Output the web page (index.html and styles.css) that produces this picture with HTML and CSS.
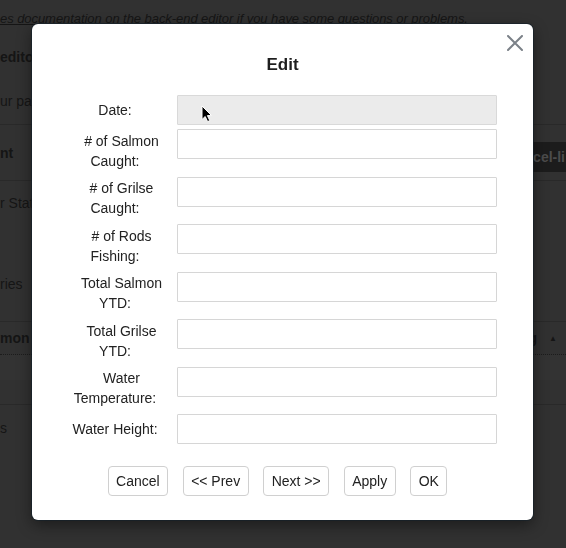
FILE: index.html
```html
<!DOCTYPE html>
<html lang="en">
<head>
<meta charset="utf-8">
<title>Edit</title>
<link rel="stylesheet" href="styles.css">
</head>
<body>
<div class="page">
  <p class="note"><span>es documentation on the back-end editor if you have some questions or problems.</span></p>
  <div class="row row-editor"><b>editor</b></div>
  <div class="row row-page rule"><span>ur page</span></div>
  <div class="row row-content rule">
    <b>nt</b>
    <span class="dark-btn">cel-li</span>
  </div>
  <div class="row row-stats"><span>r Statistics</span></div>
  <div class="row row-gap"></div>
  <div class="row row-entries"><span>ries</span></div>
  <div class="row row-spacer rule"></div>
  <div class="row row-head dotted">
    <b>mon Caught</b>
    <b class="sort-col">Fishing</b>
    <span class="sort-arrow">&#9650;</span>
  </div>
  <div class="row row-band"></div>
  <div class="row row-foot rule"></div>
  <div class="row row-settings"><span>s</span></div>
</div>

<div class="overlay">
  <div class="modal">
    <button class="close" type="button" aria-label="Close">
      <svg width="16" height="16" viewBox="0 0 16 16"><path d="M1 1 L15 15 M15 1 L1 15" stroke="#7b8188" stroke-width="2" stroke-linecap="round" fill="none"/></svg>
    </button>
    <h2 class="title">Edit</h2>
    <form class="fields">
      <label class="field-label">Date:</label>
      <div class="field-box">
        <input class="field-input is-readonly" type="text" readonly>
        <svg class="pointer" width="12" height="18" viewBox="0 0 12 18"><path d="M1 1 L1 14.5 L4.2 11.5 L6.6 16.6 L8.8 15.6 L6.4 10.6 L10.6 10.6 Z" fill="#000" stroke="#fff" stroke-width="1" stroke-linejoin="round"/></svg>
      </div>
      <label class="field-label"><span class="first"># of Salmon</span><br>Caught:</label>
      <input class="field-input" type="text">
      <label class="field-label"><span class="first"># of Grilse</span><br>Caught:</label>
      <input class="field-input" type="text">
      <label class="field-label"><span class="first"># of Rods</span><br>Fishing:</label>
      <input class="field-input" type="text">
      <label class="field-label"><span class="first">Total Salmon</span><br>YTD:</label>
      <input class="field-input" type="text">
      <label class="field-label"><span class="first">Total Grilse</span><br>YTD:</label>
      <input class="field-input" type="text">
      <label class="field-label"><span class="first">Water</span><br>Temperature:</label>
      <input class="field-input" type="text">
      <label class="field-label">Water Height:</label>
      <input class="field-input" type="text">
    </form>
    <div class="actions">
      <button class="btn" type="button">Cancel</button>
      <button class="btn" type="button">&lt;&lt; Prev</button>
      <button class="btn" type="button">Next &gt;&gt;</button>
      <button class="btn" type="button">Apply</button>
      <button class="btn" type="button">OK</button>
    </div>
  </div>
</div>
</body>
</html>
```

FILE: styles.css
```css
* {
  box-sizing: border-box;
}

html,
body {
  margin: 0;
  height: 100%;
  overflow: hidden;
}

body {
  background: #313131;
  font-family: "Liberation Sans", Arial, sans-serif;
  font-size: 14px;
  color: #151515;
}

/* dimmed page behind the dialog */
.page {
  width: 100%;
}

.note {
  margin: 0;
  height: 36px;
  display: flex;
  align-items: center;
  white-space: nowrap;
  font-style: italic;
  font-size: 13px;
  letter-spacing: -0.06px;
}

.note span {
  text-decoration: underline;
}

.row {
  display: flex;
  align-items: center;
  white-space: nowrap;
}

.rule {
  border-bottom: 1px solid #292929;
}

.dotted {
  border-bottom: 1px dotted #1c1c1c;
}

.row-editor { height: 42px; }
.row-page { height: 47px; }
.row-content { height: 56px; }

.dark-btn {
  margin-left: auto;
  margin-top: 8px;
  height: 30px;
  padding: 0 1px 0 40px;
  display: flex;
  align-items: center;
  background: #1c1c1c;
  color: #4c4c4c;
  font-weight: bold;
}

.row-stats { height: 44px; }
.row-gap { height: 37px; }
.row-entries { height: 44px; }
.row-spacer { height: 16px; }
.row-head { height: 33px; }

.sort-col {
  margin-left: auto;
}

.sort-arrow {
  font-size: 8px;
  margin: 0 9px 0 12px;
}

.row-band {
  height: 25px;
  background: #333333;
}

.row-foot { height: 25px; }
.row-settings { height: 46px; }

/* dialog */
.overlay {
  position: fixed;
  inset: 0;
  padding: 24px 0 0 32px;
}

.modal {
  position: relative;
  width: 501px;
  background: #fff;
  border-radius: 6px;
  box-shadow: 0 0 0 1px rgba(20, 32, 42, 0.65), 0 5px 15px rgba(0, 0, 0, 0.45);
  padding: 29px 36px 24px 31px;
  color: #222;
}

.close {
  position: absolute;
  top: 11px;
  right: 10px;
  width: 16px;
  height: 16px;
  padding: 0;
  border: 0;
  background: none;
  display: block;
}

.close svg {
  display: block;
}

.title {
  margin: 0 -5px 0 0;
  text-align: center;
  font-size: 17px;
  font-weight: bold;
  line-height: 24px;
  color: #1e1e1e;
}

.fields {
  margin: 18px 0 0;
  display: grid;
  grid-template-columns: 104px 320px;
  column-gap: 10px;
  row-gap: 4px;
}

.field-label {
  align-self: center;
  text-align: center;
  line-height: 20px;
  padding: 1.75px 0;
  color: #222;
}

.field-label .first {
  padding-left: 13px;
}

.field-box {
  position: relative;
  align-self: start;
}

.field-input {
  display: block;
  align-self: start;
  width: 320px;
  height: 30px;
  margin: 0;
  border: 1px solid #d6d6d6;
  border-radius: 1px;
  background: #fff;
  font: inherit;
  padding: 0 6px;
}

.field-input.is-readonly {
  background: #ebebeb;
  border-color: #d9d9d9;
}

.pointer {
  position: absolute;
  left: 24px;
  top: 10px;
}

.actions {
  margin-top: 22px;
  display: flex;
  justify-content: center;
  gap: 14.5px;
  padding-right: 5px;
}

.btn {
  height: 30px;
  padding: 0 7.5px;
  border: 1px solid #d0d0d0;
  border-radius: 4px;
  background: #fff;
  font-family: "Liberation Sans", Arial, sans-serif;
  font-size: 14px;
  color: #222;
}
```
